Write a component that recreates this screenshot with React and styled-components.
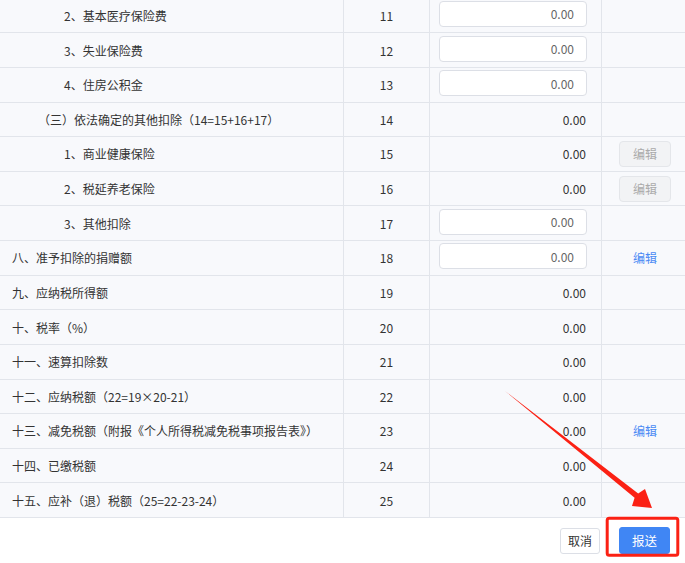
import React from "react";
import styled, { createGlobalStyle } from "styled-components";

const Global = createGlobalStyle`
  html, body { margin: 0; padding: 0; background: #fff; }
  body {
    font-family: "Noto Sans CJK SC", "Microsoft YaHei", "Noto Sans", sans-serif;
    font-size: 12px;
    color: #333;
  }
  * { box-sizing: border-box; }
`;

const Page = styled.div`
  position: relative;
  width: 685px;
  height: 563px;
  overflow: hidden;
  display: flex;
  flex-direction: column;
`;

const TableViewport = styled.div`
  height: 518px;
  overflow: hidden;
  display: flex;
  flex-direction: column;
  justify-content: flex-end;
  background: #f8f9fc;
`;

const Row = styled.div`
  flex: none;
  display: grid;
  grid-template-columns: 344px 86px 172px 1fr;
  height: 34.64px;
  border-bottom: 1px solid #e2e5eb;
  background: #f8f9fc;
`;

const Cell = styled.div`
  display: flex;
  align-items: center;
  min-width: 0;
  border-right: ${(p) => (p.$last ? "none" : "1px solid #e2e5eb")};
`;

const NameCell = styled(Cell)`
  padding-left: ${(p) => p.$indent}px;
  white-space: nowrap;
  color: #333;
`;

const NoCell = styled(Cell)`
  justify-content: center;
  color: #333;
`;

const AmountCell = styled(Cell)`
  justify-content: flex-end;
  padding: 0 15px 0 9px;
  color: #333;
`;

const AmountInput = styled.div`
  width: 148px;
  height: 26px;
  margin-right: -1px;
  margin-bottom: 3px;
  background: #fff;
  border: 1px solid #dcdfe6;
  border-radius: 4px;
  display: flex;
  align-items: center;
  justify-content: flex-end;
  padding-right: 12px;
  color: #666;
`;

const ActionCell = styled(Cell)`
  justify-content: center;
  padding-left: 3px;
`;

const DisabledButton = styled.div`
  width: 52px;
  height: 26px;
  border: 1px solid #e4e6ea;
  border-radius: 4px;
  background: #f2f3f5;
  color: #aaa;
  display: flex;
  align-items: center;
  justify-content: center;
`;

const EditLink = styled.span`
  color: #4a8af4;
  cursor: pointer;
`;

const Footer = styled.div`
  flex: 1;
  background: #fff;
  display: flex;
  align-items: center;
  justify-content: flex-end;
  gap: 19px;
  padding-right: 15px;
`;

const Button = styled.div`
  height: ${(p) => (p.$primary ? "27px" : "26px")};
  padding: 0 ${(p) => (p.$primary ? "12px" : "7px")};
  border-radius: 3px;
  display: flex;
  align-items: center;
  justify-content: center;
  font-size: ${(p) => (p.$primary ? "12.5px" : "12px")};
  background: ${(p) => (p.$primary ? "#4086f4" : "#fff")};
  color: ${(p) => (p.$primary ? "#fff" : "#333")};
  border: 1px solid ${(p) => (p.$primary ? "#4086f4" : "#dcdfe6")};
`;

const Annotation = styled.svg`
  position: absolute;
  left: 0;
  top: 0;
  width: 685px;
  height: 563px;
  pointer-events: none;
`;

const rows = [
  { name: "2、基本医疗保险费", indent: 64, no: 11, input: true },
  { name: "3、失业保险费", indent: 64, no: 12, input: true },
  { name: "4、住房公积金", indent: 64, no: 13, input: true },
  { name: "（三）依法确定的其他扣除（14=15+16+17）", indent: 38, no: 14 },
  { name: "1、商业健康保险", indent: 64, no: 15, action: "disabled" },
  { name: "2、税延养老保险", indent: 64, no: 16, action: "disabled" },
  { name: "3、其他扣除", indent: 64, no: 17, input: true },
  { name: "八、准予扣除的捐赠额", indent: 12, no: 18, input: true, action: "link" },
  { name: "九、应纳税所得额", indent: 12, no: 19 },
  { name: "十、税率（%）", indent: 12, no: 20 },
  { name: "十一、速算扣除数", indent: 12, no: 21 },
  { name: "十二、应纳税额（22=19×20-21）", indent: 12, no: 22 },
  { name: "十三、减免税额（附报《个人所得税减免税事项报告表》）", indent: 12, no: 23, action: "link" },
  { name: "十四、已缴税额", indent: 12, no: 24 },
  { name: "十五、应补（退）税额（25=22-23-24）", indent: 12, no: 25 },
];

export default function App() {
  return (
    <Page>
      <Global />
      <TableViewport>
        {rows.map((r) => (
          <Row key={r.no}>
            <NameCell $indent={r.indent}>{r.name}</NameCell>
            <NoCell>{r.no}</NoCell>
            <AmountCell>
              {r.input ? <AmountInput>0.00</AmountInput> : "0.00"}
            </AmountCell>
            <ActionCell $last>
              {r.action === "disabled" && <DisabledButton>编辑</DisabledButton>}
              {r.action === "link" && <EditLink>编辑</EditLink>}
            </ActionCell>
          </Row>
        ))}
      </TableViewport>
      <Footer>
        <Button>取消</Button>
        <Button $primary>报送</Button>
      </Footer>
      <Annotation viewBox="0 0 685 563">
        <polygon
          fill="#fb2114"
          points="505,391 638.2,493.4 645,489 652,508 632,506 634.6,497.7"
        />
        <rect
          x="607.2"
          y="518.2"
          width="70.6"
          height="37"
          rx="2"
          fill="none"
          stroke="#fb2114"
          strokeWidth="3"
        />
      </Annotation>
    </Page>
  );
}
